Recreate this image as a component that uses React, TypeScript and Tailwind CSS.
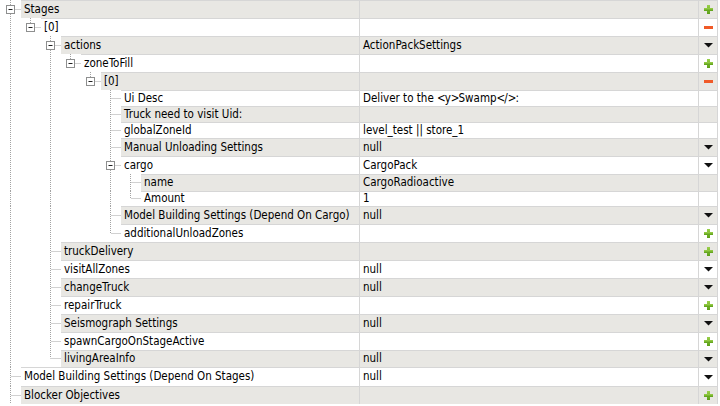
import React from "react";

type Btn = "plus" | "minus" | "tri";
type Node = { label: string; value?: string; btn?: Btn; children?: Node[] };

const tree: Node[] = [
  {
    label: "Stages",
    btn: "plus",
    children: [
      {
        label: "[0]",
        btn: "minus",
        children: [
          {
            label: "actions",
            value: "ActionPackSettings",
            btn: "tri",
            children: [
              {
                label: "zoneToFill",
                btn: "plus",
                children: [
                  {
                    label: "[0]",
                    btn: "minus",
                    children: [
                      { label: "Ui Desc", value: "Deliver to the <y>Swamp</>:" },
                      { label: "Truck need to visit Uid:" },
                      { label: "globalZoneId", value: "level_test || store_1" },
                      { label: "Manual Unloading Settings", value: "null", btn: "tri" },
                      {
                        label: "cargo",
                        value: "CargoPack",
                        btn: "tri",
                        children: [
                          { label: "name", value: "CargoRadioactive" },
                          { label: "Amount", value: "1" },
                        ],
                      },
                      { label: "Model Building Settings (Depend On Cargo)", value: "null", btn: "tri" },
                      { label: "additionalUnloadZones", btn: "plus" },
                    ],
                  },
                ],
              },
            ],
          },
          { label: "truckDelivery", btn: "plus" },
          { label: "visitAllZones", value: "null", btn: "tri" },
          { label: "changeTruck", value: "null", btn: "tri" },
          { label: "repairTruck", btn: "plus" },
          { label: "Seismograph Settings", value: "null", btn: "tri" },
          { label: "spawnCargoOnStageActive", btn: "plus" },
          { label: "livingAreaInfo", value: "null", btn: "tri" },
        ],
      },
    ],
  },
  { label: "Model Building Settings (Depend On Stages)", value: "null", btn: "tri" },
  { label: "Blocker Objectives", btn: "plus" },
];

type Flat = { n: Node; level: number; cont: boolean[]; hasNext: boolean };

function flatten(nodes: Node[], level: number, cont: boolean[], out: Flat[]) {
  nodes.forEach((n, i) => {
    const last = i === nodes.length - 1;
    const hasNext = level === 0 ? true : !last;
    out.push({ n, level, cont: [...cont], hasNext });
    if (n.children) flatten(n.children, level + 1, [...cont, hasNext], out);
  });
}

const rows: Flat[] = [];
flatten(tree, 0, [], rows);

const HEIGHTS = [18, 18, 18, 18, 18, 16, 16, 16, 18, 18, 17, 15, 18, 18, 18, 18, 18, 18, 18, 18, 17, 19, 18];

const DOT = "#a3a3a3";

function Gutter({ r, h }: { r: Flat; h: number }) {
  const L = r.level;
  const w = 21 + 20 * L;
  const c = Math.floor(h / 2) + 0.5;
  const ox = (k: number) => 10.5 + 20 * k;
  return (
    <svg width={w} height={h} className="shrink-0 block">
      {r.cont.map((on, k) =>
        on ? <line key={k} x1={ox(k)} x2={ox(k)} y1={0} y2={h} stroke={DOT} strokeDasharray="1 1" /> : null
      )}
      <line x1={ox(L)} x2={ox(L)} y1={0} y2={r.hasNext ? h : c} stroke={DOT} strokeDasharray="1 1" />
      <line x1={ox(L) + 1} x2={w} y1={c} y2={c} stroke={DOT} strokeDasharray="1 1" />
      {r.n.children && (
        <g>
          <rect x={20 * L + 6.5} y={c - 4} width={8} height={8} fill="#fff" stroke="#8e8f8f" />
          <line x1={20 * L + 8.5} x2={20 * L + 12.5} y1={c} y2={c} stroke="#222" />
        </g>
      )}
    </svg>
  );
}

function Icon({ b }: { b?: Btn }) {
  if (b === "plus")
    return (
      <svg width="9" height="9" viewBox="0 0 9 9">
        <defs>
          <linearGradient id="gp" x1="0" y1="0" x2="0" y2="1">
            <stop offset="0" stopColor="#9cd14c" />
            <stop offset="1" stopColor="#5a9e16" />
          </linearGradient>
        </defs>
        <rect x="3" y="0" width="3" height="9" fill="url(#gp)" />
        <rect x="0" y="3" width="9" height="3" fill="url(#gp)" />
      </svg>
    );
  if (b === "minus")
    return (
      <svg width="9" height="3" viewBox="0 0 9 3">
        <rect x="0" y="0" width="9" height="3" fill="#f05a28" />
      </svg>
    );
  if (b === "tri")
    return (
      <svg width="9" height="5" viewBox="0 0 9 5">
        <path d="M0 0H9L4.5 4.5Z" fill="#111" />
      </svg>
    );
  return null;
}

function ValueText({ v }: { v: string }) {
  const parts = v.split(/([<>])/);
  return (
    <span className="whitespace-pre">
      {parts.map((p, i) =>
        p === "<" || p === ">" ? (
          <span key={i} className="tracking-[-1px]">
            {p}
          </span>
        ) : (
          <React.Fragment key={i}>{p}</React.Fragment>
        )
      )}
    </span>
  );
}

export default function App() {
  return (
    <div
      className="w-[720px] h-[406px] bg-white overflow-hidden text-[11.5px] text-black"
      style={{ fontFamily: '"DejaVu Sans Condensed", "DejaVu Sans", sans-serif', fontStretch: "condensed" }}
    >
      {rows.map((r, i) => {
        const h = HEIGHTS[i];
        const grey = i % 2 === 0;
        const bg = grey ? "bg-[#e8e7e3]" : "bg-white";
        return (
          <div key={i} className="flex" style={{ height: h }}>
            <div className="flex w-[359px] shrink-0">
              <Gutter r={r} h={h} />
              <div
                className={`flex-1 min-w-0 flex items-center pl-[3px] whitespace-nowrap overflow-hidden border-t border-[#d6d6d6] ${bg}`}
              >
                {r.n.label}
              </div>
            </div>
            <div
              className={`w-[339px] shrink-0 flex items-center pl-[3px] whitespace-nowrap overflow-hidden border-t border-l border-[#d6d6d6] ${bg}`}
            >
              {r.n.value ? <ValueText v={r.n.value} /> : null}
            </div>
            <div
              className={`w-[20px] shrink-0 flex items-center justify-center border-t border-l border-r border-[#d6d6d6] ${bg}`}
            >
              <Icon b={r.n.btn} />
            </div>
          </div>
        );
      })}
    </div>
  );
}
